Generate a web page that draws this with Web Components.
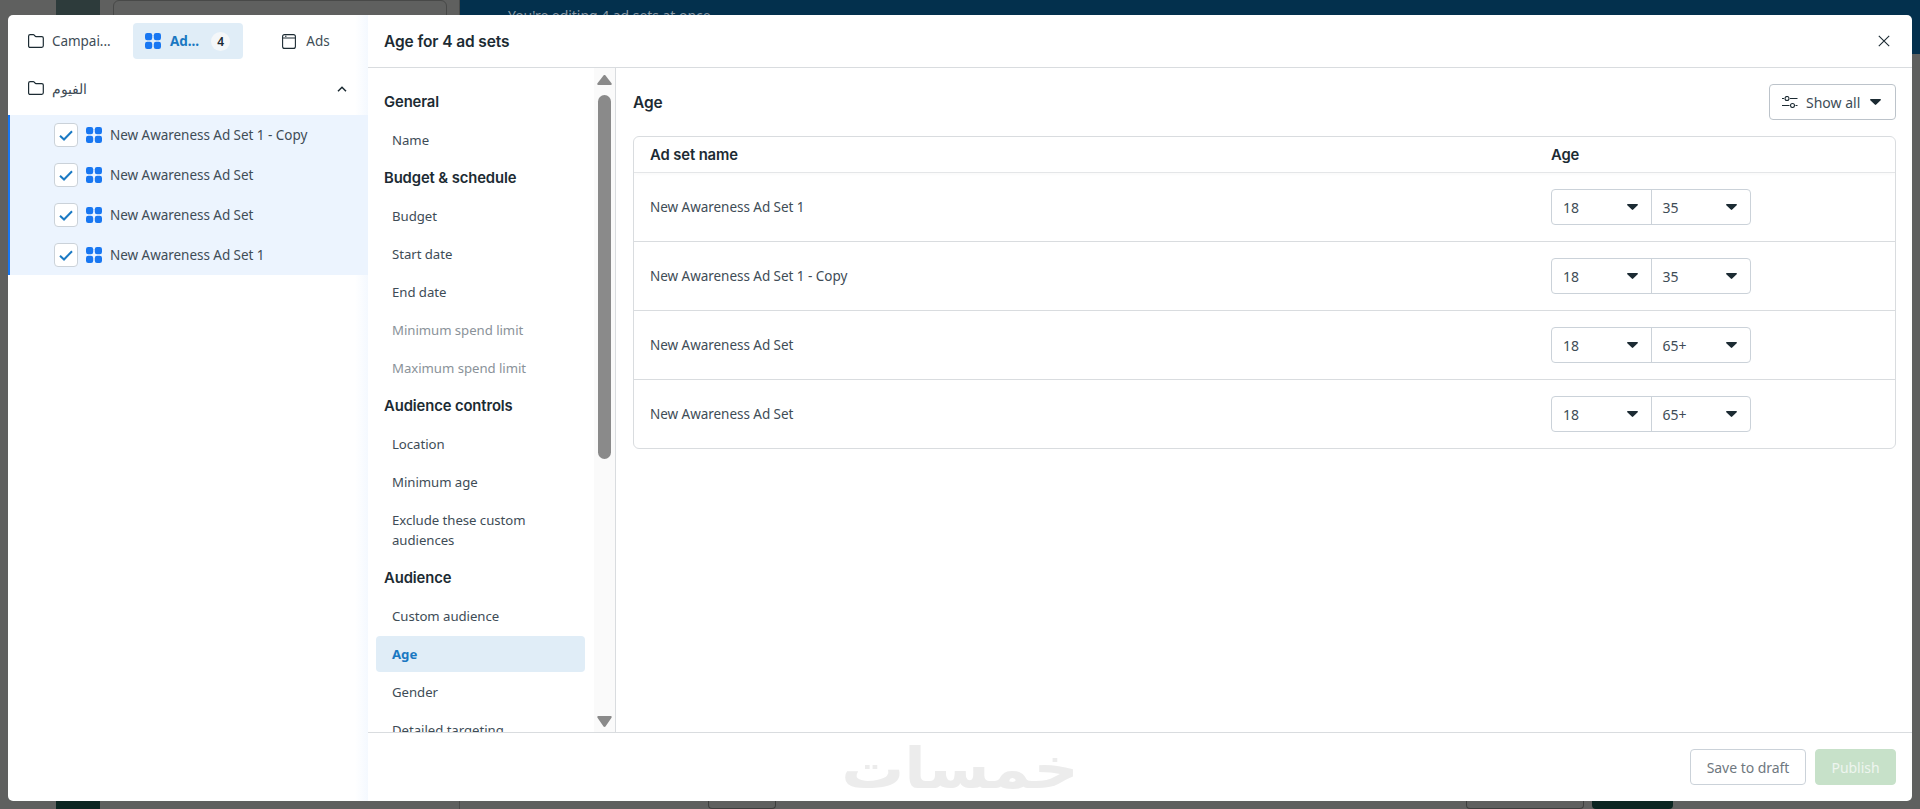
<!DOCTYPE html>
<html lang="en">
<head>
<meta charset="utf-8">
<title>Age for 4 ad sets</title>
<style>
  html, body { margin: 0; height: 100%; }
  body { font-family: "Noto Sans", "Liberation Sans", sans-serif; font-size: 13.500px; letter-spacing: -.04px; color: #1c2b33; overflow: hidden; }
</style>
</head>
<body>
<edit-page></edit-page>
<script>
const FOLDER = `<svg width="16" height="14" viewBox="0 0 16 14" fill="none" stroke="#1c2b33" stroke-width="1.2"><path d="M.6 2.2C.6 1.2 1.2.6 2.1.6h3.1c.5 0 .8.2 1.1.6l.8 1c.2.3.5.4.9.4h5.8c.9 0 1.500.6 1.500 1.500v7.700c0 .9-.6 1.500-1.500 1.500H2.100C1.200 13.400.6 12.800.6 11.900z"/></svg>`;
const GRID = `<svg width="16" height="16" viewBox="0 0 16 16" fill="#1877f2"><rect width="7.200" height="7.200" rx="2.200"/><rect x="8.800" width="7.200" height="7.200" rx="2.200"/><rect y="8.800" width="7.200" height="7.200" rx="2.200"/><rect x="8.800" y="8.800" width="7.200" height="7.200" rx="2.200"/></svg>`;
const ADS = `<svg width="14" height="15" viewBox="0 0 14 15" fill="none" stroke="#1c2b33" stroke-width="1.100"><rect x=".6" y=".6" width="12.800" height="13.800" rx="2"/><path d="M.6 4h12.800M3 2.300h1.500"/></svg>`;
const CARET = `<svg width="11" height="6" viewBox="0 0 11 6" fill="#1c2b33"><path d="M.8 0h9.400c.7 0 1 .8.5 1.300L6.200 5.600c-.4.400-1 .4-1.400 0L.3 1.300C-.2.800.1 0 .8 0z"/></svg>`;

class EditPage extends HTMLElement {
  constructor() {
    super();
    this.attachShadow({ mode: 'open' });
    this.shadowRoot.innerHTML = `
      <style>
        :host { display: flex; width: 1920px; height: 809px; background: #5f605f; position: relative; overflow: hidden; }
        .side { width: 459px; border-right: 1px solid #4a4b4a; display: flex; flex-direction: column; justify-content: space-between; flex: none; }
        .top, .bottom { display: flex; padding-left: 56px; gap: 13px; }
        .logo { width: 44px; height: 15px; background: #2d3b3b; }
        .search { width: 332px; height: 30px; border: 1px solid #484948; border-radius: 6px; }
        .bottom .logo { background: #0b2521; height: 8px; }
        .bottom { align-items: flex-end; }
        .main { flex: 1; display: flex; flex-direction: column; justify-content: space-between; }
        .banner { height: 54px; background: #03304d; color: #8b9aa6; padding: 6px 0 0 48px; box-sizing: border-box; line-height: 19px; font-size: 14px; }
        .foot { display: flex; justify-content: flex-end; gap: 8px; padding-right: 247px; align-items: flex-end; }
        .foot .out { width: 116px; height: 7px; border: 1px solid #3d3e3d; border-top: 0; border-radius: 0 0 4px 4px; }
        .foot .dark { width: 81px; height: 8px; background: #0b2521; border-radius: 0 0 4px 4px; }
        .foot .out2 { width: 66px; height: 7px; border: 1px solid #3d3e3d; border-top: 0; border-radius: 0 0 4px 4px; margin-right: 682px; }
      </style>
      <div class="side">
        <div class="top"><div class="logo"></div><div class="search"></div></div>
        <div class="bottom"><div class="logo"></div></div>
      </div>
      <div class="main">
        <div class="banner">You're editing 4 ad sets at once</div>
        <div class="foot"><div class="out2"></div><div class="out"></div><div class="dark"></div></div>
      </div>
      <edit-modal></edit-modal>`;
  }
}

class EditModal extends HTMLElement {
  constructor() {
    super();
    this.attachShadow({ mode: 'open' });
    this.shadowRoot.innerHTML = `
      <style>
        :host { position: absolute; left: 8px; top: 15px; width: 1904px; height: 786px; background: #fff; border-radius: 5px; display: flex; overflow: hidden; }
        .content { flex: 1; min-width: 0; display: flex; flex-direction: column; }
        header { height: 52px; flex: none; border-bottom: 1px solid #d9dcdf; display: flex; align-items: center; justify-content: space-between; padding: 0 22px 0 16px; font: 600 15.500px Inter, "Noto Sans", sans-serif; letter-spacing: -.1px; }
        header svg { display: block; }
        .body { flex: 1; min-height: 0; display: flex; }
        footer { height: 69px; flex: none; border-top: 1px solid #d9dcdf; display: flex; align-items: center; justify-content: flex-end; gap: 9px; padding: 0 16px; position: relative; box-sizing: border-box; }
        .mark { position: absolute; left: 477px; top: 3px; height: 65px; width: 230px; text-align: center; color: #ececec; font: 700 56px/65px "DejaVu Sans", sans-serif; letter-spacing: 0; transform: scaleX(1.12); }
      </style>
      <tree-panel></tree-panel>
      <div class="content">
        <header>Age for 4 ad sets
          <svg width="12" height="12" viewBox="0 0 12 12" fill="none" stroke="#1c2b33" stroke-width="1.100"><path d="M.8.8l10.400 10.400M11.200.8L.8 11.200"/></svg>
        </header>
        <div class="body">
          <nav-column></nav-column>
          <age-pane></age-pane>
        </div>
        <footer>
          <span class="mark" dir="rtl" lang="ar">خمسات</span>
          <app-button>Save to draft</app-button>
          <app-button primary>Publish</app-button>
        </footer>
      </div>`;
  }
}

class TreePanel extends HTMLElement {
  constructor() {
    super();
    this.attachShadow({ mode: 'open' });
    const names = ['New Awareness Ad Set 1 - Copy', 'New Awareness Ad Set', 'New Awareness Ad Set', 'New Awareness Ad Set 1'];
    this.shadowRoot.innerHTML = `
      <style>
        :host { display: block; width: 360px; flex: none; position: relative; }
        :host::after { content: ""; position: absolute; top: 0; bottom: 0; right: 0; width: 13px; background: linear-gradient(to right, rgba(236,244,254,0), rgba(236,244,254,.55)); }
        .tabs { display: flex; gap: 8px; padding: 8px 7px 0; }
        .tab { width: 110px; height: 36px; box-sizing: border-box; border-radius: 4px; display: flex; align-items: center; color: #3e4c56; }
        .tab svg { display: block; flex: none; }
        .tab.camp { padding-left: 13px; gap: 8px; }
        .tab.on { background: #e0edf7; padding-left: 12px; color: #1a78c2; font-weight: 700; gap: 9px; }
        .tab.ads { justify-content: center; gap: 10px; }
        .badge { width: 19px; height: 19px; border-radius: 50%; background: #f4f7f9; color: #1c2b33; font-size: 12px; font-weight: 600; display: flex; align-items: center; justify-content: center; margin-left: 3px; }
        .camp-row { height: 40px; margin-top: 10px; display: flex; align-items: center; padding: 0 21px 3px 20px; gap: 8px; color: #3e4c56; }
        .camp-row .name { flex: 1; }
        .camp-row svg { display: block; }
        .camp-row svg:first-child { margin-top: -3px; }
        .list { margin-top: 3px; background: #ecf4fe; border-left: 2px solid #1877f2; }
        .row { height: 40px; display: flex; align-items: center; padding-left: 44px; color: #3e4c56; }
        .box { width: 24px; height: 24px; box-sizing: border-box; background: #fff; border: 1px solid #cbd2d9; border-radius: 4px; display: flex; align-items: center; justify-content: center; margin-right: 8px; }
        .row svg { display: block; }
        .row .label { margin-left: 8px; white-space: nowrap; }
      </style>
      <div class="tabs">
        <div class="tab camp">${FOLDER}<span>Campai...</span></div>
        <div class="tab on">${GRID}<span>Ad...</span><span class="badge">4</span></div>
        <div class="tab ads">${ADS}<span>Ads</span></div>
      </div>
      <div class="camp-row">${FOLDER}
        <span class="name" lang="ar">الفيوم</span>
        <svg width="10" height="6" viewBox="0 0 10 6" fill="none" stroke="#1c2b33" stroke-width="1.500"><path d="M1 5.200l4-4 4 4"/></svg>
      </div>
      <div class="list">
        ${names.map(n => `<div class="row"><span class="box"><svg width="14" height="11" viewBox="0 0 14 11" fill="none" stroke="#1b7ac4" stroke-width="2"><path d="M1 5.800l4 3.700 8-8.300"/></svg></span>${GRID}<span class="label">${n}</span></div>`).join('')}
      </div>`;
  }
}

class NavColumn extends HTMLElement {
  constructor() {
    super();
    this.attachShadow({ mode: 'open' });
    const items = [
      ['h', 'General'], ['i', 'Name'],
      ['h', 'Budget &amp; schedule'], ['i', 'Budget'], ['i', 'Start date'], ['i', 'End date'],
      ['d', 'Minimum spend limit'], ['d', 'Maximum spend limit'],
      ['h', 'Audience controls'], ['i', 'Location'], ['i', 'Minimum age'], ['i', 'Exclude these custom audiences'],
      ['h', 'Audience'], ['i', 'Custom audience'], ['a', 'Age'], ['i', 'Gender'], ['i', 'Detailed targeting'],
    ];
    this.shadowRoot.innerHTML = `
      <style>
        :host { display: flex; width: 248px; box-sizing: border-box; flex: none; border-right: 1px solid #d9dcdf; height: 664px; overflow: hidden; font-size: 13.200px; }
        .list { flex: 1; min-width: 0; padding: 16px 9px 0 8px; overflow: hidden; }
        .it { min-height: 36px; margin-bottom: 2px; box-sizing: border-box; padding: 8px 12px 8px 16px; line-height: 20px; color: #3e4c56; border-radius: 4px; }
        .h { padding-left: 8px; font: 600 14.800px/20px Inter, "Noto Sans", sans-serif; color: #1c2b33; letter-spacing: -.1px; }
        .d { color: #8a9299; }
        .a { background: #e0edf7; color: #1a78c2; font-weight: 700; }
        .bar { width: 21px; flex: none; background: #fafafa; display: flex; flex-direction: column; align-items: center; padding: 7px 0 5px; box-sizing: border-box; }
        .thumb { width: 13px; height: 364px; background: #8a8a8a; border-radius: 7px; margin-top: 10px; margin-bottom: auto; }
        .bar svg { display: block; }
      </style>
      <div class="list">
        ${items.map(([k, t]) => `<div class="it ${k}">${t}</div>`).join('')}
      </div>
      <div class="bar">
        <svg width="15" height="10" viewBox="0 0 15 10" fill="#8a8a8a"><path d="M6.500.5c.5-.6 1.500-.6 2 0l6 7.700c.5.700.1 1.800-.9 1.800H1.400C.4 10 0 8.900.5 8.200z"/></svg>
        <div class="thumb"></div>
        <svg width="15" height="11" viewBox="0 0 15 11" fill="#8a8a8a"><path d="M6.500 10.500c.5.600 1.500.6 2 0l6-8.700C15 1.100 14.600 0 13.600 0H1.400C.4 0 0 1.100.5 1.800z"/></svg>
      </div>`;
  }
}

class AgePane extends HTMLElement {
  constructor() {
    super();
    this.attachShadow({ mode: 'open' });
    const rows = [
      ['New Awareness Ad Set 1', '35'], ['New Awareness Ad Set 1 - Copy', '35'],
      ['New Awareness Ad Set', '65+'], ['New Awareness Ad Set', '65+'],
    ];
    this.shadowRoot.innerHTML = `
      <style>
        :host { flex: 1; min-width: 0; display: block; padding: 16px 16px 0 17px; }
        .top { display: flex; align-items: center; justify-content: space-between; height: 36px; font: 600 15.500px Inter, "Noto Sans", sans-serif; letter-spacing: -.1px; }
        .show { width: 127px; height: 36px; box-sizing: border-box; border: 1px solid #bcc3ca; border-radius: 4px; display: flex; align-items: center; padding-left: 12px; font: 400 14px "Noto Sans", sans-serif; letter-spacing: 0; color: #3e4c56; }
        .show svg { display: block; flex: none; }
        .show span { margin: 0 10px 0 8px; }
        .table { margin-top: 16px; border: 1px solid #d9dcdf; border-radius: 6px; overflow: hidden; }
        .row, .head { display: grid; grid-template-columns: 901px 1fr; padding-left: 16px; align-items: center; }
        .head { height: 35px; border-bottom: 1px solid #e4e6e8; font: 600 14.800px Inter, "Noto Sans", sans-serif; letter-spacing: -.1px; box-shadow: 0 2px 3px rgba(0,0,0,.02); }
        .row { height: 69px; box-sizing: border-box; border-bottom: 1px solid #d9dcdf; color: #3e4c56; }
        .row:last-child { border-bottom: 0; height: 68px; }
      </style>
      <div class="top">Age
        <div class="show">
          <svg width="16" height="12" viewBox="0 0 16 12" fill="none" stroke="#1c2b33" stroke-width="1.100"><path d="M0 2.500h2M8 2.500h7.500M0 9.500h7.500M13.500 9.500h2"/><circle cx="5" cy="2.500" r="2"/><circle cx="10.500" cy="9.500" r="2"/></svg>
          <span>Show all</span>${CARET}
        </div>
      </div>
      <div class="table">
        <div class="head"><span>Ad set name</span><span>Age</span></div>
        ${rows.map(([n, a]) => `<div class="row"><span>${n}</span><age-select min="18" max="${a}"></age-select></div>`).join('')}
      </div>`;
  }
}

class AgeSelect extends HTMLElement {
  constructor() {
    super();
    this.attachShadow({ mode: 'open' });
  }
  connectedCallback() {
    const part = v => `<div class="p"><span>${v}</span>${CARET}</div>`;
    this.shadowRoot.innerHTML = `
      <style>
        :host { display: flex; width: 200px; height: 36px; box-sizing: border-box; border: 1px solid #cbd2d9; border-radius: 4px; color: #3e4c56; font-size: 14px; }
        .p { flex: 1; display: flex; align-items: center; justify-content: space-between; padding: 0 13px 0 11px; }
        .p + .p { border-left: 1px solid #cbd2d9; }
        svg { display: block; }
      </style>
      ${part(this.getAttribute('min'))}${part(this.getAttribute('max'))}`;
  }
}

class AppButton extends HTMLElement {
  constructor() {
    super();
    this.attachShadow({ mode: 'open' });
    this.shadowRoot.innerHTML = `
      <style>
        :host { display: flex; align-items: center; justify-content: center; height: 36px; box-sizing: border-box; border: 1px solid #cbd2d9; border-radius: 4px; width: 116px; color: #6f7880; font-size: 14px; }
        :host([primary]) { width: 81px; background: #c7e1c9; border-color: #c7e1c9; color: #eef5ef; }
      </style>
      <slot></slot>`;
  }
}

customElements.define('edit-page', EditPage);
customElements.define('edit-modal', EditModal);
customElements.define('tree-panel', TreePanel);
customElements.define('nav-column', NavColumn);
customElements.define('age-pane', AgePane);
customElements.define('age-select', AgeSelect);
customElements.define('app-button', AppButton);
</script>
</body>
</html>
